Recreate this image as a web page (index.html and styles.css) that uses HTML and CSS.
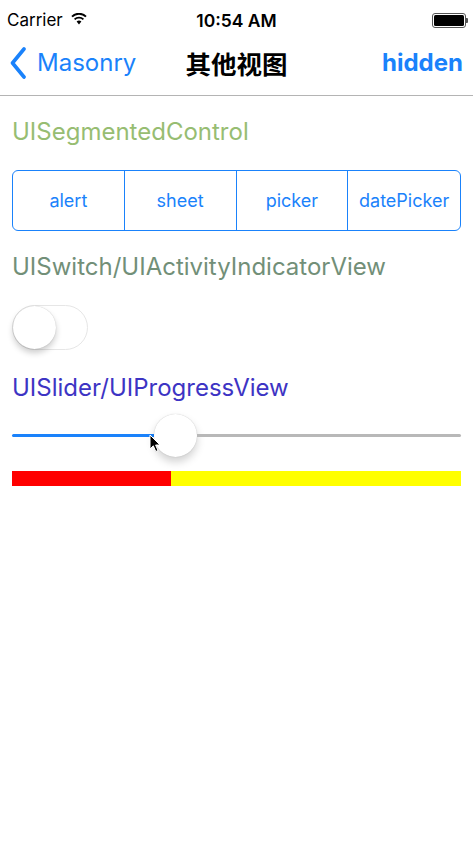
FILE: index.html
```html
<!DOCTYPE html>
<html>
<head>
<meta charset="utf-8">
<link rel="stylesheet" href="styles.css">
</head>
<body>
<div class="screen">
  <div class="status">
    <div class="status-left">
      <span class="carrier">Carrier</span>
      <svg class="wifi" width="16" height="12" viewBox="0 0 16 12">
        <path d="M8 11.5 L5.6 8.6 A3.6 3.6 0 0 1 10.4 8.6 Z" fill="#000"/>
        <path d="M3.6 6.4 A6.4 6.4 0 0 1 12.4 6.4" stroke="#000" stroke-width="1.9" fill="none"/>
        <path d="M1 3.6 A10 10 0 0 1 15 3.6" stroke="#000" stroke-width="1.9" fill="none"/>
      </svg>
    </div>
    <div class="time">10:54 AM</div>
    <div class="status-right">
      <div class="battery"><div class="battery-fill"></div></div>
      <div class="battery-nub"></div>
    </div>
  </div>
  <div class="nav">
    <div class="nav-back">
      <svg class="chevron" width="16" height="32" viewBox="0 0 16 32">
        <path d="M14 2 L2.5 16 L14 30" stroke="#1a82fb" stroke-width="3.6" fill="none" stroke-linecap="round" stroke-linejoin="round"/>
      </svg>
      <span class="back-text">Masonry</span>
    </div>
    <div class="nav-title">其他视图</div>
    <div class="nav-right">hidden</div>
  </div>
  <div class="content">
    <div class="label label-green">UISegmentedControl</div>
    <div class="segmented">
      <div class="seg">alert</div>
      <div class="seg">sheet</div>
      <div class="seg">picker</div>
      <div class="seg">datePicker</div>
    </div>
    <div class="label label-gray">UISwitch/UIActivityIndicatorView</div>
    <div class="switch"><div class="knob"></div></div>
    <div class="label label-purple">UISlider/UIProgressView</div>
    <div class="slider">
      <div class="track-fill"></div>
      <div class="thumb"></div>
      <div class="track-rest"></div>
      <svg class="cursor" width="13" height="19" viewBox="0 0 13 19">
        <path d="M1 1 L1 15 L4.3 11.8 L6.8 17.5 L9 16.5 L6.6 11 L11 11 Z" fill="#000" stroke="#fff" stroke-width="1"/>
      </svg>
    </div>
    <div class="progress">
      <div class="progress-fill" style="width:35.4%"></div>
    </div>
  </div>
</div>
</body>
</html>
```
FILE: styles.css
```css
* { box-sizing: border-box; }
html, body { margin: 0; padding: 0; background: #fff; }
body {
  font-family: Inter, "Noto Sans CJK SC", sans-serif;
  width: 473px;
  height: 849px;
  overflow: hidden;
}
.screen { width: 473px; }

.status {
  height: 40px;
  display: flex;
  align-items: center;
  justify-content: space-between;
  padding: 0 5px 0 7px;
  position: relative;
}
.status-left { display: flex; align-items: center; gap: 8px; width: 120px; }
.carrier { font-size: 17px; color: #000; }
.wifi { margin-top: -2px; }
.time {
  font-size: 17.5px;
  font-weight: 600;
  color: #000;
  position: absolute;
  left: 0; right: 0;
  text-align: center;
  pointer-events: none;
}
.status-right { display: flex; align-items: center; width: 120px; justify-content: flex-end; }
.battery {
  width: 34px;
  height: 15px;
  border: 1px solid #555;
  border-radius: 3px;
  padding: 1px;
}
.battery-fill { width: 100%; height: 100%; background: #000; border-radius: 1.5px; }
.battery-nub { width: 2px; height: 5px; background: #555; border-radius: 0 1px 1px 0; }

.nav {
  height: 56px;
  border-bottom: 1px solid #b4b4b4;
  display: flex;
  align-items: center;
  justify-content: space-between;
  padding: 0 10px 10px 10px;
  position: relative;
}
.nav-back { display: flex; align-items: center; gap: 11px; }
.chevron { margin-top: 0; }
.back-text { font-size: 24px; color: #1a82fb; }
.nav-title {
  position: absolute;
  left: 0; right: 0;
  top: 0; bottom: 10px;
  display: flex;
  align-items: center;
  justify-content: center;
  font-size: 25.5px;
  font-weight: 700;
  color: #000;
  font-family: "Noto Sans CJK SC", sans-serif;
  pointer-events: none;
}
.nav-right { font-size: 24px; font-weight: 700; color: #1a82fb; }

.content { padding: 0 12px; }
.label { font-size: 24px; line-height: 28px; }
.label-green { color: #97bd72; margin-top: 22px; }
.label-gray { color: #728f78; margin-top: 22px; }
.label-purple { color: #3d34c4; margin-top: 24px; }

.segmented {
  margin-top: 24px;
  height: 61px;
  border: 1.5px solid #1a82fb;
  border-radius: 6px;
  display: grid;
  grid-template-columns: repeat(4, 1fr);
}
.seg {
  display: flex;
  align-items: center;
  justify-content: center;
  font-size: 18px;
  color: #1a82fb;
  border-right: 1.5px solid #1a82fb;
}
.seg:last-child { border-right: none; }

.switch {
  margin-top: 24px;
  width: 76px;
  height: 45px;
  border: 1.5px solid #e6e6e6;
  border-radius: 23px;
  display: flex;
  align-items: center;
}
.knob {
  width: 43px;
  height: 43px;
  border-radius: 50%;
  background: #fff;
  box-shadow: 0 4px 6px rgba(0,0,0,0.2), 0 0 1px rgba(0,0,0,0.25);
}

.slider {
  margin-top: 11px;
  height: 44px;
  display: flex;
  align-items: center;
  position: relative;
}
.track-fill { width: 142px; height: 3px; background: #1a82fb; border-radius: 2px 0 0 2px; }
.thumb {
  width: 43px;
  height: 43px;
  border-radius: 50%;
  background: #fff;
  box-shadow: 0 5px 8px rgba(0,0,0,0.18), 0 0 1px rgba(0,0,0,0.25);
  flex: none;
}
.track-rest { flex: 1; height: 3px; background: #b8b8b8; border-radius: 0 2px 2px 0; }
.cursor { position: absolute; left: 137px; top: 21px; }

.progress {
  margin-top: 14px;
  height: 15px;
  background: #ffff00;
  display: flex;
}
.progress-fill { background: #ff0000; height: 100%; }
```
